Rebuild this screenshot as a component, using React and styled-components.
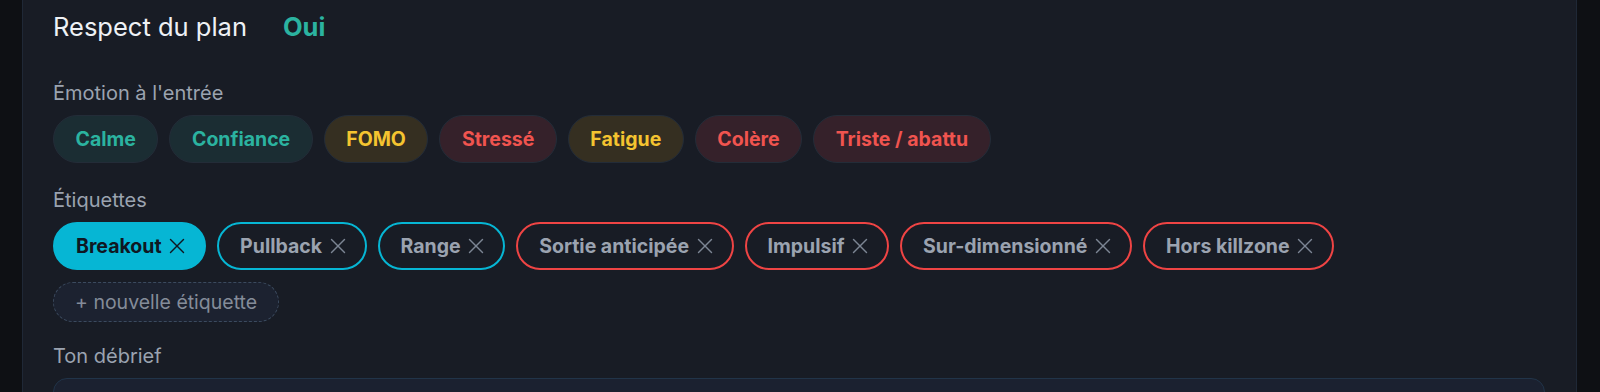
import React from 'react'
import styled, { createGlobalStyle } from 'styled-components'
import { X } from 'lucide-react'

const GlobalStyle = createGlobalStyle`
  html, body {
    margin: 0;
    padding: 0;
    background: #0e1014;
    font-family: Inter, "Noto Sans", sans-serif;
    overflow: hidden;
  }
`

const Page = styled.div`
  height: 392px;
  overflow: hidden;
  padding: 0 23px 0 22px;
  box-sizing: border-box;
`

const Panel = styled.div`
  background: #181c25;
  border: 1px solid #1f2836;
  border-top: none;
  min-height: 100%;
  box-sizing: border-box;
  padding: 8px 31px 0 30px;
  display: flex;
  flex-direction: column;
  & > * {
    flex-shrink: 0;
  }
`

const PlanRow = styled.div`
  display: flex;
  align-items: center;
  gap: 36px;
  height: 36px;
`

const PlanLabel = styled.span`
  font-size: 25.5px;
  color: #eef1f5;
`

const PlanValue = styled.span`
  font-size: 25.5px;
  font-weight: 700;
  color: #2bb3a0;
`

const Label = styled.div`
  font-size: 20px;
  color: #9ba3b0;
  margin-top: ${p => p.$top || 0}px;
  margin-bottom: 8px;
  line-height: 28px;
`

const Row = styled.div`
  display: flex;
  flex-wrap: wrap;
  gap: 12px 11px;
`

const tones = {
  teal: { bg: '#1b2d33', fg: '#2bb3a0' },
  yellow: { bg: '#352f21', fg: '#f4c430' },
  red: { bg: '#35212a', fg: '#f0544f' },
}

const Emotion = styled.div`
  height: 48px;
  box-sizing: border-box;
  padding: 0 21.5px;
  border-radius: 24px;
  border: 1px solid #232c38;
  background: ${p => tones[p.$tone].bg};
  color: ${p => tones[p.$tone].fg};
  font-size: 19.5px;
  font-weight: 700;
  display: flex;
  align-items: center;
`

const Tag = styled.div`
  height: 48px;
  box-sizing: border-box;
  padding: 0 14px 0 21px;
  border-radius: 24px;
  border: 2px solid ${p => (p.$active ? '#06b6d4' : p.$color)};
  background: ${p => (p.$active ? '#06b6d4' : 'transparent')};
  color: ${p => (p.$active ? '#0f1722' : '#9ba3b0')};
  font-size: 19.5px;
  font-weight: 700;
  display: flex;
  align-items: center;
  gap: 2.5px;
  svg {
    color: ${p => (p.$active ? '#0f1722' : '#7c8594')};
  }
`

const NewTag = styled.div`
  align-self: flex-start;
  margin-top: 12px;
  height: 40px;
  box-sizing: border-box;
  border-radius: 20px;
  border: 1px dashed #3b4a5e;
  background: #1c2230;
  color: #848c99;
  font-size: 19.5px;
  display: flex;
  align-items: center;
  padding: 0 21px;
`

const TextBox = styled.div`
  height: 80px;
  border: 1px solid #213449;
  border-radius: 14px;
  background: #1b2130;
`

const emotions = [
  ['Calme', 'teal'],
  ['Confiance', 'teal'],
  ['FOMO', 'yellow'],
  ['Stressé', 'red'],
  ['Fatigue', 'yellow'],
  ['Colère', 'red'],
  ['Triste / abattu', 'red'],
]

const tags = [
  ['Breakout', '#06b6d4', true],
  ['Pullback', '#06b6d4'],
  ['Range', '#06b6d4'],
  ['Sortie anticipée', '#ef4444'],
  ['Impulsif', '#ef4444'],
  ['Sur-dimensionné', '#ef4444'],
  ['Hors killzone', '#ef4444'],
]

export default function App() {
  return (
    <Page>
      <GlobalStyle />
      <Panel>
        <PlanRow>
          <PlanLabel>Respect du plan</PlanLabel>
          <PlanValue>Oui</PlanValue>
        </PlanRow>

        <Label $top={35}>Émotion à l'entrée</Label>
        <Row>
          {emotions.map(([name, tone]) => (
            <Emotion key={name} $tone={tone}>{name}</Emotion>
          ))}
        </Row>

        <Label $top={23}>Étiquettes</Label>
        <Row>
          {tags.map(([name, color, active]) => (
            <Tag key={name} $color={color} $active={active}>
              {name}
              <X size={26} strokeWidth={1.3} />
            </Tag>
          ))}
        </Row>
        <NewTag>+ nouvelle étiquette</NewTag>

        <Label $top={20}>Ton débrief</Label>
        <TextBox />
      </Panel>
    </Page>
  )
}
